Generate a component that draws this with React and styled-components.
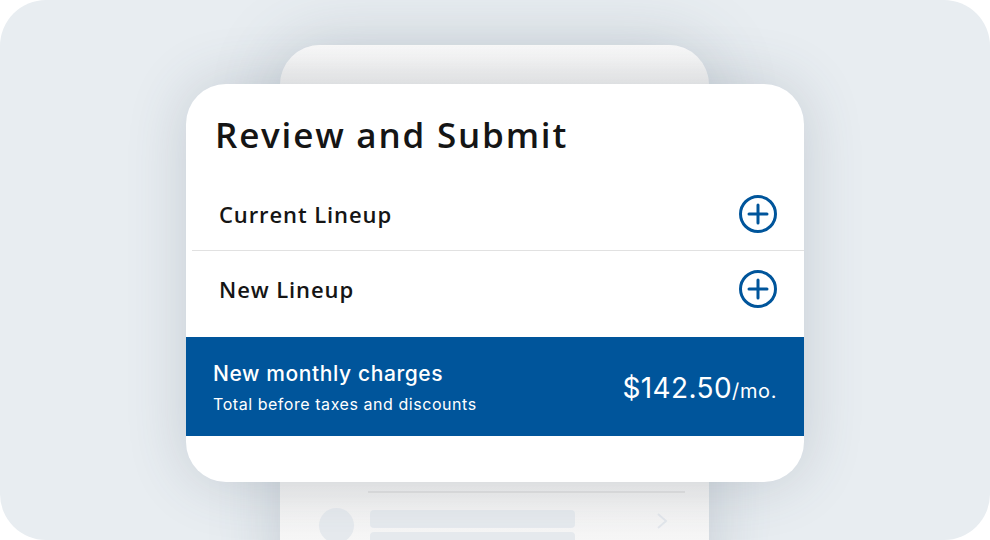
import React from "react";
import styled, { createGlobalStyle } from "styled-components";

const GlobalStyle = createGlobalStyle`
  html, body {
    margin: 0;
    padding: 0;
    background: #ffffff;
  }
`;

// Outer rounded frame
const Frame = styled.div`
  width: 990px;
  height: 540px;
  border-radius: 46px;
  background: #e8edf1;
  overflow: hidden;
  display: grid;
  justify-items: center;
  align-items: start;
`;

// Phone-ish card sitting behind
const BackCard = styled.div`
  grid-area: 1 / 1;
  width: 429px;
  height: 560px;
  margin-top: 45px;
  margin-left: -2px;
  border-radius: 40px;
  background: linear-gradient(#fafafa, #f0f0f0 40px, #f0f0f0 440px, #fafafa 520px);
  box-shadow: 0 0 70px rgba(70, 85, 105, 0.22);
  box-sizing: border-box;
  padding-top: 446px;
`;

const SkeletonLine = styled.div`
  margin: 0 24px 0 88px;
  height: 2px;
  background: #e2e2e2;
`;

const SkeletonRow = styled.div`
  display: flex;
  align-items: flex-start;
  padding: 15px 40px 0 39px;
  gap: 16px;
`;

const SkeletonDot = styled.div`
  width: 35px;
  height: 35px;
  border-radius: 50%;
  background: #e6eaee;
  flex-shrink: 0;
`;

const SkeletonBars = styled.div`
  display: flex;
  flex-direction: column;
  gap: 4px;
  width: 205px;
  margin-top: 2px;
`;

const SkeletonBar = styled.div`
  height: 18px;
  border-radius: 4px;
  background: #e6eaee;
`;

const Chevron = styled.svg`
  margin-left: auto;
  margin-top: 4px;
`;

// Main card
const Card = styled.div`
  grid-area: 1 / 1;
  width: 618px;
  height: 398px;
  margin-top: 84px;
  border-radius: 40px;
  background: #ffffff;
  overflow: hidden;
  box-shadow: 0 0 60px rgba(60, 75, 95, 0.2);
  display: flex;
  flex-direction: column;
`;

const Header = styled.div`
  padding: 29px 29px 20px;
`;

const Title = styled.h1`
  margin: 0;
  font-family: "Open Sans", "Noto Sans", sans-serif;
  font-weight: 600;
  font-size: 35px;
  line-height: 44px;
  color: #151515;
  letter-spacing: 1.8px;
`;

const List = styled.div`
  margin-left: 6px;
  padding-bottom: 10px;
`;

const Row = styled.div`
  display: flex;
  align-items: center;
  justify-content: space-between;
  height: ${(p) => p.$h}px;
  padding: 0 27px;
  border-bottom: ${(p) => (p.$divider ? "1px solid #e1e1e1" : "none")};
`;

const RowLabel = styled.span`
  font-family: "Open Sans", "Noto Sans", sans-serif;
  font-weight: 600;
  font-size: 22px;
  color: #151515;
  letter-spacing: 0.9px;
`;

const Band = styled.div`
  height: 99px;
  background: #00559b;
  display: flex;
  align-items: center;
  justify-content: space-between;
  padding: 0 27px;
  color: #ffffff;
  font-family: "Inter", "Roboto", sans-serif;
`;

const BandText = styled.div`
  display: flex;
  flex-direction: column;
  gap: 7px;
  margin-top: 2px;
`;

const BandTitle = styled.div`
  font-size: 21px;
  font-weight: 500;
  line-height: 26px;
  letter-spacing: 0.6px;
`;

const BandSub = styled.div`
  font-size: 16px;
  line-height: 20px;
  font-weight: 400;
  letter-spacing: 0.55px;
`;

const Price = styled.div`
  font-size: 28px;
  font-weight: 400;
  margin-top: 2px;
  letter-spacing: 0.4px;
`;

const Per = styled.span`
  font-size: 20px;
  letter-spacing: 0.6px;
`;

const PlusIcon = () => (
  <svg width="38" height="38" viewBox="0 0 38 38">
    <circle cx="19" cy="19" r="17.5" fill="none" stroke="#00559b" strokeWidth="3" />
    <path d="M19 10v18M10 19h18" stroke="#00559b" strokeWidth="3" strokeLinecap="round" />
  </svg>
);

export default function App() {
  return (
    <>
      <GlobalStyle />
      <Frame>
        <BackCard>
          <SkeletonLine />
          <SkeletonRow>
            <SkeletonDot />
            <SkeletonBars>
              <SkeletonBar />
              <SkeletonBar />
            </SkeletonBars>
            <Chevron width="14" height="18" viewBox="0 0 14 18">
              <path d="M3 2l8 7-8 7" fill="none" stroke="#e3e7ec" strokeWidth="2" />
            </Chevron>
          </SkeletonRow>
        </BackCard>
        <Card>
          <Header>
            <Title>Review and Submit</Title>
          </Header>
          <List>
            <Row $h={73} $divider>
              <RowLabel>Current Lineup</RowLabel>
              <PlusIcon />
            </Row>
            <Row $h={76}>
              <RowLabel>New Lineup</RowLabel>
              <PlusIcon />
            </Row>
          </List>
          <Band>
            <BandText>
              <BandTitle>New monthly charges</BandTitle>
              <BandSub>Total before taxes and discounts</BandSub>
            </BandText>
            <Price>
              $142.50<Per>/mo.</Per>
            </Price>
          </Band>
        </Card>
      </Frame>
    </>
  );
}
